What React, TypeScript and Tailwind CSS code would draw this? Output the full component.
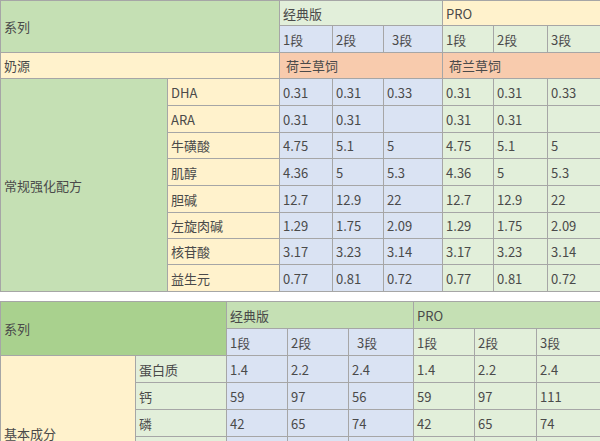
import React from 'react';

const cell = 'border border-[#a6a6a6] px-[3px] py-0 text-left align-middle font-normal whitespace-nowrap';

const BLUE = 'bg-[#dae3f3]';
const LGREEN = 'bg-[#e2efda]';
const YELLOW = 'bg-[#fff2cc]';
const GREEN = 'bg-[#c5e0b4]';
const ORANGE = 'bg-[#f8cbad]';

const enriched: [string, string[], number][] = [
  ['DHA', ['0.31', '0.31', '0.33'], 27],
  ['ARA', ['0.31', '0.31', ''], 27],
  ['牛磺酸', ['4.75', '5.1', '5'], 26],
  ['肌醇', ['4.36', '5', '5.3'], 27],
  ['胆碱', ['12.7', '12.9', '22'], 27],
  ['左旋肉碱', ['1.29', '1.75', '2.09'], 26],
  ['核苷酸', ['3.17', '3.23', '3.14'], 26],
  ['益生元', ['0.77', '0.81', '0.72'], 27],
];

const basic: [string, string[]][] = [
  ['蛋白质', ['1.4', '2.2', '2.4', '1.4', '2.2', '2.4']],
  ['钙', ['59', '97', '56', '59', '97', '111']],
  ['磷', ['42', '65', '74', '42', '65', '74']],
  ['', ['', '', '', '', '', '']],
  ['', ['', '', '', '', '', '']],
  ['', ['', '', '', '', '', '']],
];

const FirstTable = () => (
  <table className="w-[600px] table-fixed border-collapse">
    <colgroup>
      <col className="w-[167px]" />
      <col className="w-[112px]" />
      <col className="w-[53px]" />
      <col className="w-[51px]" />
      <col className="w-[59px]" />
      <col className="w-[51px]" />
      <col className="w-[54px]" />
      <col className="w-[53px]" />
    </colgroup>
    <tbody>
      <tr className="h-[25px]">
        <td className={`${cell} ${GREEN}`} colSpan={2} rowSpan={2}>系列</td>
        <td className={`${cell} ${LGREEN}`} colSpan={3}>经典版</td>
        <td className={`${cell} ${YELLOW}`} colSpan={3}>PRO</td>
      </tr>
      <tr className="h-[27px]">
        <td className={`${cell} ${BLUE}`}>1段</td>
        <td className={`${cell} ${BLUE}`}>2段</td>
        <td className={`${cell} ${BLUE} pl-[8px]`}>3段</td>
        <td className={`${cell} ${LGREEN}`}>1段</td>
        <td className={`${cell} ${LGREEN}`}>2段</td>
        <td className={`${cell} ${LGREEN}`}>3段</td>
      </tr>
      <tr className="h-[26px]">
        <td className={`${cell} ${YELLOW}`} colSpan={2}>奶源</td>
        <td className={`${cell} ${ORANGE} pl-[6px]`} colSpan={3}>荷兰草饲</td>
        <td className={`${cell} ${ORANGE} pl-[6px]`} colSpan={3}>荷兰草饲</td>
      </tr>
      {enriched.map(([name, vals, h], i) => (
        <tr key={name} style={{ height: h }}>
          {i === 0 && (
            <td className={`${cell} ${GREEN}`} rowSpan={enriched.length}>常规强化配方</td>
          )}
          <td className={`${cell} ${YELLOW}`}>{name}</td>
          {vals.map((v, j) => (
            <td key={'c' + j} className={`${cell} ${BLUE}`}>{v}</td>
          ))}
          {vals.map((v, j) => (
            <td key={'p' + j} className={`${cell} ${LGREEN}`}>{v}</td>
          ))}
        </tr>
      ))}
    </tbody>
  </table>
);

const SecondTable = () => (
  <table className="mt-[9px] w-[600px] table-fixed border-collapse">
    <colgroup>
      <col className="w-[135px]" />
      <col className="w-[91px]" />
      <col className="w-[61px]" />
      <col className="w-[61px]" />
      <col className="w-[65px]" />
      <col className="w-[61px]" />
      <col className="w-[62px]" />
      <col className="w-[64px]" />
    </colgroup>
    <tbody>
      <tr className="h-[27px]">
        <td className={`${cell} bg-[#a9d18e]`} colSpan={2} rowSpan={2}>系列</td>
        <td className={`${cell} bg-[#c5e0b4]`} colSpan={3}>经典版</td>
        <td className={`${cell} bg-[#c5e0b4]`} colSpan={3}>PRO</td>
      </tr>
      <tr className="h-[27px]">
        <td className={`${cell} ${BLUE}`}>1段</td>
        <td className={`${cell} ${BLUE}`}>2段</td>
        <td className={`${cell} ${BLUE} pl-[8px]`}>3段</td>
        <td className={`${cell} ${LGREEN}`}>1段</td>
        <td className={`${cell} ${LGREEN}`}>2段</td>
        <td className={`${cell} ${LGREEN}`}>3段</td>
      </tr>
      {basic.map(([name, vals], i) => (
        <tr key={i} className="h-[27px]">
          {i === 0 && (
            <td className={`${cell} ${YELLOW} pb-[6px]`} rowSpan={basic.length}>基本成分</td>
          )}
          <td className={`${cell} ${LGREEN}`}>{name}</td>
          {vals.map((v, j) => (
            <td key={j} className={`${cell} ${j < 3 ? BLUE : LGREEN}`}>{v}</td>
          ))}
        </tr>
      ))}
    </tbody>
  </table>
);

export default function App() {
  return (
    <div className="h-[441px] w-[600px] overflow-hidden bg-white text-[13px] leading-none text-[#4a4a4a] [font-family:'Noto_Sans_CJK_SC','Noto_Sans',sans-serif]">
      <FirstTable />
      <SecondTable />
    </div>
  );
}
